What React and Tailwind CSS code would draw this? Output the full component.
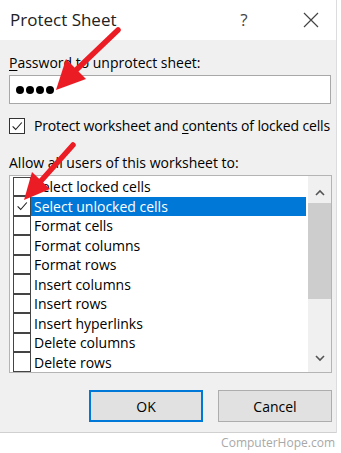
const ITEMS = [
  'Select locked cells',
  'Select unlocked cells',
  'Format cells',
  'Format columns',
  'Format rows',
  'Insert columns',
  'Insert rows',
  'Insert hyperlinks',
  'Delete columns',
  'Delete rows',
]

function Check({ className }) {
  return (
    <svg viewBox="0 0 16 16" className={className} fill="none" stroke="#222" strokeWidth="1.3">
      <path d="M3 8.5 L6.5 12 L13.5 4" />
    </svg>
  )
}

export default function App() {
  return (
    <div className="relative w-[341px] h-[453px] bg-white overflow-hidden text-black" style={{ fontFamily: '"Open Sans", "Noto Sans", sans-serif' }}>
      <div className="w-[337px] border-r border-[#dcdcdc]">
        {/* Title bar */}
        <div className="h-[40px] bg-white flex items-center pl-[10px]">
          <span className="text-[17px] text-[#222] flex-1">Protect Sheet</span>
          <span className="text-[17px] text-[#444] w-[20px] text-center mr-[49px]">?</span>
          <svg width="16" height="16" viewBox="0 0 16 16" className="mr-[17px]" stroke="#444" strokeWidth="1.2">
            <path d="M1 1 L15 15 M15 1 L1 15" />
          </svg>
        </div>

        {/* Body */}
        <div className="bg-[#f0f0f0] border-b border-[#d0d0d0] pl-[9px] pr-[5px] pt-[14px] pb-[10px] text-[14px]">
          <div className="h-[18px] leading-[18px]">
            <span className="underline underline-offset-2">P</span>assword to unprotect sheet:
          </div>
          <div className="mt-[3px] h-[29px] w-[322px] bg-white border border-[#a8a8a8] flex items-center pl-[6px] gap-[2px]">
            {[0, 1, 2, 3].map((i) => (
              <span key={i} className="w-[8px] h-[8px] rounded-full bg-black" />
            ))}
          </div>

          <div className="mt-[14px] h-[16px] flex items-center">
            <div className="w-[16px] h-[16px] border border-[#333] bg-white flex items-center justify-center shrink-0">
              <Check className="w-[14px] h-[14px]" />
            </div>
            <span className="ml-[9px] leading-[18px] whitespace-nowrap tracking-[-0.15px]">
              Protect worksheet and <span className="underline underline-offset-2">c</span>ontents of locked cells
            </span>
          </div>

          <div className="mt-[20px] h-[18px] leading-[18px]">Allow all users of this worksheet to:</div>

          {/* List box */}
          <div className="mt-[3px] w-[323px] h-[198px] bg-white border border-[#b4b4b4] flex">
            <div className="flex-1 flex flex-col pl-[3px] pt-[1px]">
              {ITEMS.map((item, i) => (
                <div key={item} className="h-[19.5px] flex items-center">
                  <div className="w-[18px] h-[19.5px] border border-[#444] bg-white -mt-px flex items-center justify-center shrink-0">
                    {i === 1 && <Check className="w-[14px] h-[14px]" />}
                  </div>
                  <div className={`h-[19px] flex-1 flex items-center pl-[3px] ${i === 1 ? 'bg-[#0078d7] text-white' : ''}`}>
                    {item}
                  </div>
                </div>
              ))}
            </div>
            <div className="w-[23px] ml-[2px] bg-[#f0f0f0] flex flex-col items-center">
              <svg width="12" height="8" viewBox="0 0 12 8" className="mt-[13px]" fill="none" stroke="#555" strokeWidth="1.6">
                <path d="M2 6 L6 2 L10 6" />
              </svg>
              <div className="mt-[6px] w-full h-[96px] bg-[#cdcdcd]" />
              <div className="flex-1" />
              <svg width="12" height="8" viewBox="0 0 12 8" className="mb-[10px]" fill="none" stroke="#555" strokeWidth="1.6">
                <path d="M2 2 L6 6 L10 2" />
              </svg>
            </div>
          </div>

          {/* Buttons */}
          <div className="mt-[17px] flex justify-end gap-[15px] w-[323px]">
            <button className="w-[114px] h-[32px] bg-[#e1e1e1] border-2 border-[#0078d7] text-[14px]">OK</button>
            <button className="w-[114px] h-[32px] bg-[#e1e1e1] border border-[#adadad] text-[14px]">Cancel</button>
          </div>
        </div>
      </div>

      {/* Footer watermark */}
      <div className="flex justify-end pr-[6px] pt-[2px]">
        <span className="text-[12px] leading-[16px] text-[#a8a8a8]">ComputerHope.com</span>
      </div>

      {/* Red arrows */}
      <svg className="absolute inset-0 pointer-events-none" width="341" height="453" viewBox="0 0 341 453">
        <line x1="118" y1="30" x2="74" y2="72" stroke="#ec1c24" strokeWidth="5.5" strokeLinecap="round" />
        <polygon points="56,90 86,79 66,59" fill="#ec1c24" />
        <line x1="73" y1="145" x2="40" y2="182" stroke="#ec1c24" strokeWidth="5.5" strokeLinecap="round" />
        <polygon points="24,200 50,189 32,172" fill="#ec1c24" />
      </svg>
    </div>
  )
}
